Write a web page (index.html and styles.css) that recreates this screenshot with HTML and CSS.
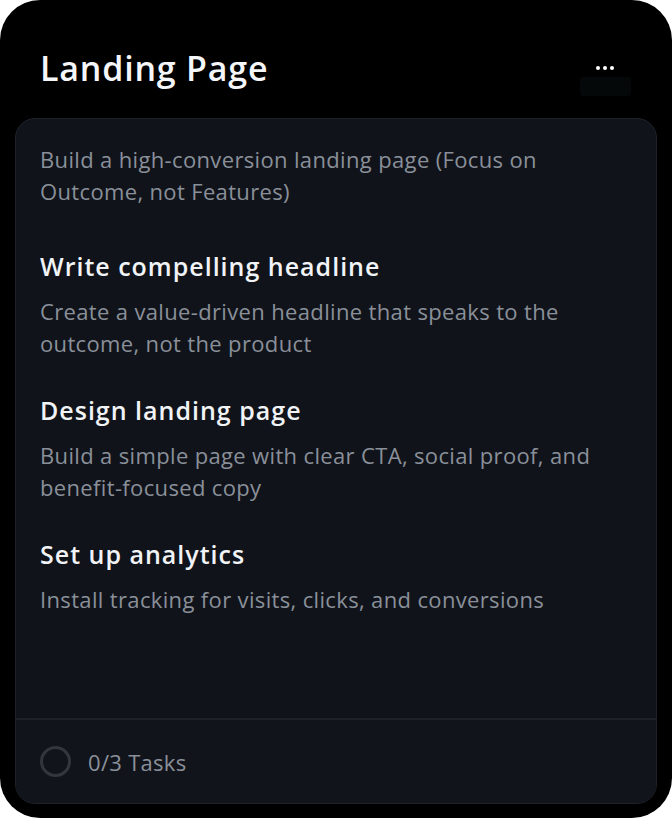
FILE: index.html
```html
<!DOCTYPE html>
<html lang="en">
<head>
    <meta charset="UTF-8">
    <meta name="viewport" content="width=device-width, initial-scale=1.0">
    <title>Landing Page</title>
    <link rel="stylesheet" href="styles.css">
</head>
<body>
    <div class="board">
        <header class="board-header">
            <h1>Landing Page</h1>
            <div class="menu">
                <button class="menu-btn" aria-label="More">
                    <svg width="20" height="6" viewBox="0 0 20 6">
                        <circle cx="3" cy="3" r="2" fill="#fff"/>
                        <circle cx="10" cy="3" r="2" fill="#fff"/>
                        <circle cx="17" cy="3" r="2" fill="#fff"/>
                    </svg>
                </button>
                <span class="menu-shadow"></span>
            </div>
        </header>

        <div class="card">
            <div class="card-body">
                <p class="intro">Build a high-conversion landing page (Focus on Outcome, not Features)</p>

                <div class="task">
                    <h2>Write compelling headline</h2>
                    <p>Create a value-driven headline that speaks to the outcome, not the product</p>
                </div>

                <div class="task">
                    <h2>Design landing page</h2>
                    <p>Build a simple page with clear CTA, social proof, and benefit-focused copy</p>
                </div>

                <div class="task">
                    <h2>Set up analytics</h2>
                    <p>Install tracking for visits, clicks, and conversions</p>
                </div>
            </div>

            <footer class="card-footer">
                <span class="progress-ring"></span>
                <span class="progress-text">0/3 Tasks</span>
            </footer>
        </div>
    </div>
</body>
</html>
```

FILE: styles.css
```css
/* Base */
html, body {
    margin: 0;
    padding: 0;
    background: #ffffff;
}

body {
    font-family: 'Open Sans', 'Liberation Sans', sans-serif;
    width: 672px;
    height: 818px;
}

/* Outer board */
.board {
    box-sizing: border-box;
    width: 672px;
    height: 818px;
    background: #000;
    border-radius: 40px;
    padding: 0 15px 14px 15px;
    display: flex;
    flex-direction: column;
}

.board-header {
    box-sizing: border-box;
    display: flex;
    align-items: center;
    justify-content: space-between;
    height: 118px;
    padding: 18px 25px 0 25px;
}

.board-header h1 {
    margin: 0;
    color: #f4f6fa;
    font-size: 34px;
    font-weight: 600;
    letter-spacing: 0.8px;
}

.menu {
    position: relative;
    margin-right: 17px;
}

.menu-btn {
    background: none;
    border: none;
    padding: 0;
    display: block;
    cursor: pointer;
}

.menu-btn svg {
    display: block;
}

.menu-shadow {
    position: absolute;
    left: -15px;
    top: 12px;
    width: 51px;
    height: 19px;
    background: #050808;
    border-radius: 3px;
}

/* Card */
.card {
    flex: 1;
    display: flex;
    flex-direction: column;
    background: #10131a;
    border: 1px solid #1e2128;
    border-radius: 20px;
    overflow: hidden;
}

.card-body {
    flex: 1;
    padding: 24px 30px 0 24px;
}

.intro {
    margin: 0 0 43px 0;
    color: #8a9099;
    font-size: 22px;
    letter-spacing: 0.35px;
    line-height: 32px;
}

.task {
    margin-bottom: 35px;
}

.task h2 {
    margin: 0 0 13px 0;
    color: #f1f3f6;
    font-size: 25px;
    font-weight: 600;
    letter-spacing: 1px;
    line-height: 32px;
}

.task p {
    margin: 0;
    color: #8a9099;
    font-size: 22px;
    letter-spacing: 0.35px;
    line-height: 32px;
}

/* Footer */
.card-footer {
    display: flex;
    align-items: center;
    gap: 17px;
    height: 83px;
    padding: 0 24px;
    border-top: 2px solid #1e2128;
    background: #11141b;
}

.progress-ring {
    box-sizing: border-box;
    width: 31px;
    height: 31px;
    border: 3px solid #33363d;
    border-radius: 50%;
}

.progress-text {
    color: #8a9099;
    font-size: 22px;
    letter-spacing: 0.3px;
}
```
